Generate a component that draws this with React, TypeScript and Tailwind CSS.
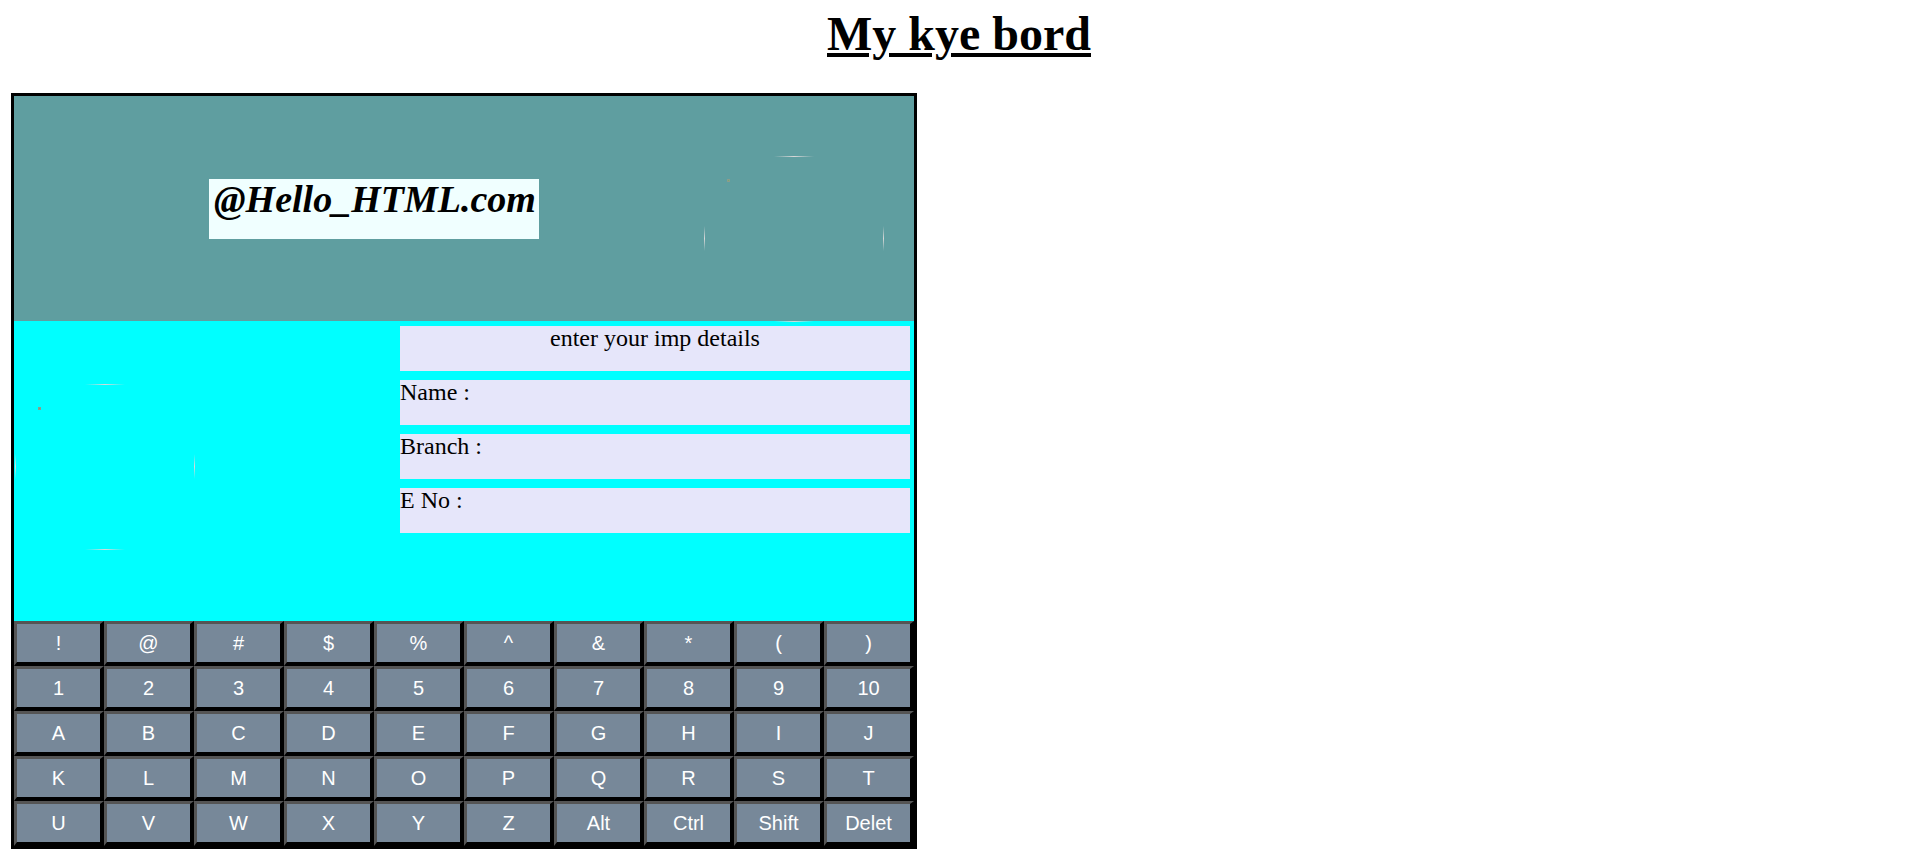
import React from "react"

const keyRows = [
  ["!", "@", "#", "$", "%", "^", "&", "*", "(", ")"],
  ["1", "2", "3", "4", "5", "6", "7", "8", "9", "10"],
  ["A", "B", "C", "D", "E", "F", "G", "H", "I", "J"],
  ["K", "L", "M", "N", "O", "P", "Q", "R", "S", "T"],
  ["U", "V", "W", "X", "Y", "Z", "Alt", "Ctrl", "Shift", "Delet"],
]

const fields = ["Name :", "Branch :", "E No :"]

// broken round image: only the faint tangent bits of its outline show up
function BrokenImage() {
  return (
    <svg width="180" height="166" viewBox="0 0 180 166" className="block shrink-0">
      <defs>
        <linearGradient id="fadeH" x1="0" x2="1" y1="0" y2="0">
          <stop offset="0" stopColor="#d8d8d8" stopOpacity="0" />
          <stop offset="0.5" stopColor="#d8d8d8" stopOpacity="1" />
          <stop offset="1" stopColor="#d8d8d8" stopOpacity="0" />
        </linearGradient>
        <linearGradient id="fadeV" x1="0" x2="0" y1="0" y2="1">
          <stop offset="0" stopColor="#d8d8d8" stopOpacity="0" />
          <stop offset="0.5" stopColor="#d8d8d8" stopOpacity="1" />
          <stop offset="1" stopColor="#d8d8d8" stopOpacity="0" />
        </linearGradient>
      </defs>
      <rect x="70" y="0" width="40" height="1" fill="url(#fadeH)" />
      <rect x="70" y="165" width="40" height="1" fill="url(#fadeH)" />
      <rect x="0" y="70" width="1" height="25" fill="url(#fadeV)" />
      <rect x="179" y="70" width="1" height="25" fill="url(#fadeV)" />
      <rect x="23" y="23" width="3" height="3" fill="#8c9c8c" />
      <rect x="24" y="24" width="1" height="1" fill="#6fae6f" />
    </svg>
  )
}

export default function App() {
  return (
    <div className="min-h-screen bg-white font-['Liberation_Serif',serif] text-black">
      <h1 className="mt-[7px] text-center text-[48px] font-bold leading-[53px] underline decoration-[4px] underline-offset-[3px]">
        My kye bord
      </h1>

      <div className="ml-[11px] mt-[33px] w-[906px] border-[3px] border-black bg-black">
        {/* header */}
        <div className="flex h-[225px] bg-[#5f9ea0]">
          <div className="ml-[195px] mt-[83px] h-[60px] w-[330px] shrink-0 bg-[#f0ffff] pl-[5px] text-[38px] font-bold italic leading-[40px]">
            @Hello_HTML.com
          </div>
          <div className="ml-[165px] mt-[60px]">
            <BrokenImage />
          </div>
        </div>

        {/* details */}
        <div className="flex h-[300px] bg-[#00ffff]">
          <div className="w-[386px] shrink-0 pl-[1px] pt-[63px]">
            <BrokenImage />
          </div>
          <div className="flex w-[510px] flex-col gap-[9px] pt-[5px] text-[24px] leading-[25px]">
            <div className="h-[45px] bg-[#e6e6fa] text-center">enter your imp details</div>
            {fields.map((f) => (
              <div key={f} className="h-[45px] bg-[#e6e6fa]">
                {f}
              </div>
            ))}
          </div>
        </div>

        {/* keyboard */}
        <div className="flex flex-col bg-black font-['Liberation_Sans',Arial,sans-serif]">
          {keyRows.map((row, i) => (
            <div key={i} className="flex">
              {row.map((k) => (
                <button
                  key={k}
                  className="flex h-[45px] w-[90px] items-center justify-center border-b-[4px] border-l-[3px] border-r-[4px] border-t-[3px] border-b-black border-l-[#555555] border-r-black border-t-[#555555] bg-[#778899] pb-[1px] text-[20px] text-white"
                >
                  {k}
                </button>
              ))}
            </div>
          ))}
        </div>
      </div>
    </div>
  )
}
